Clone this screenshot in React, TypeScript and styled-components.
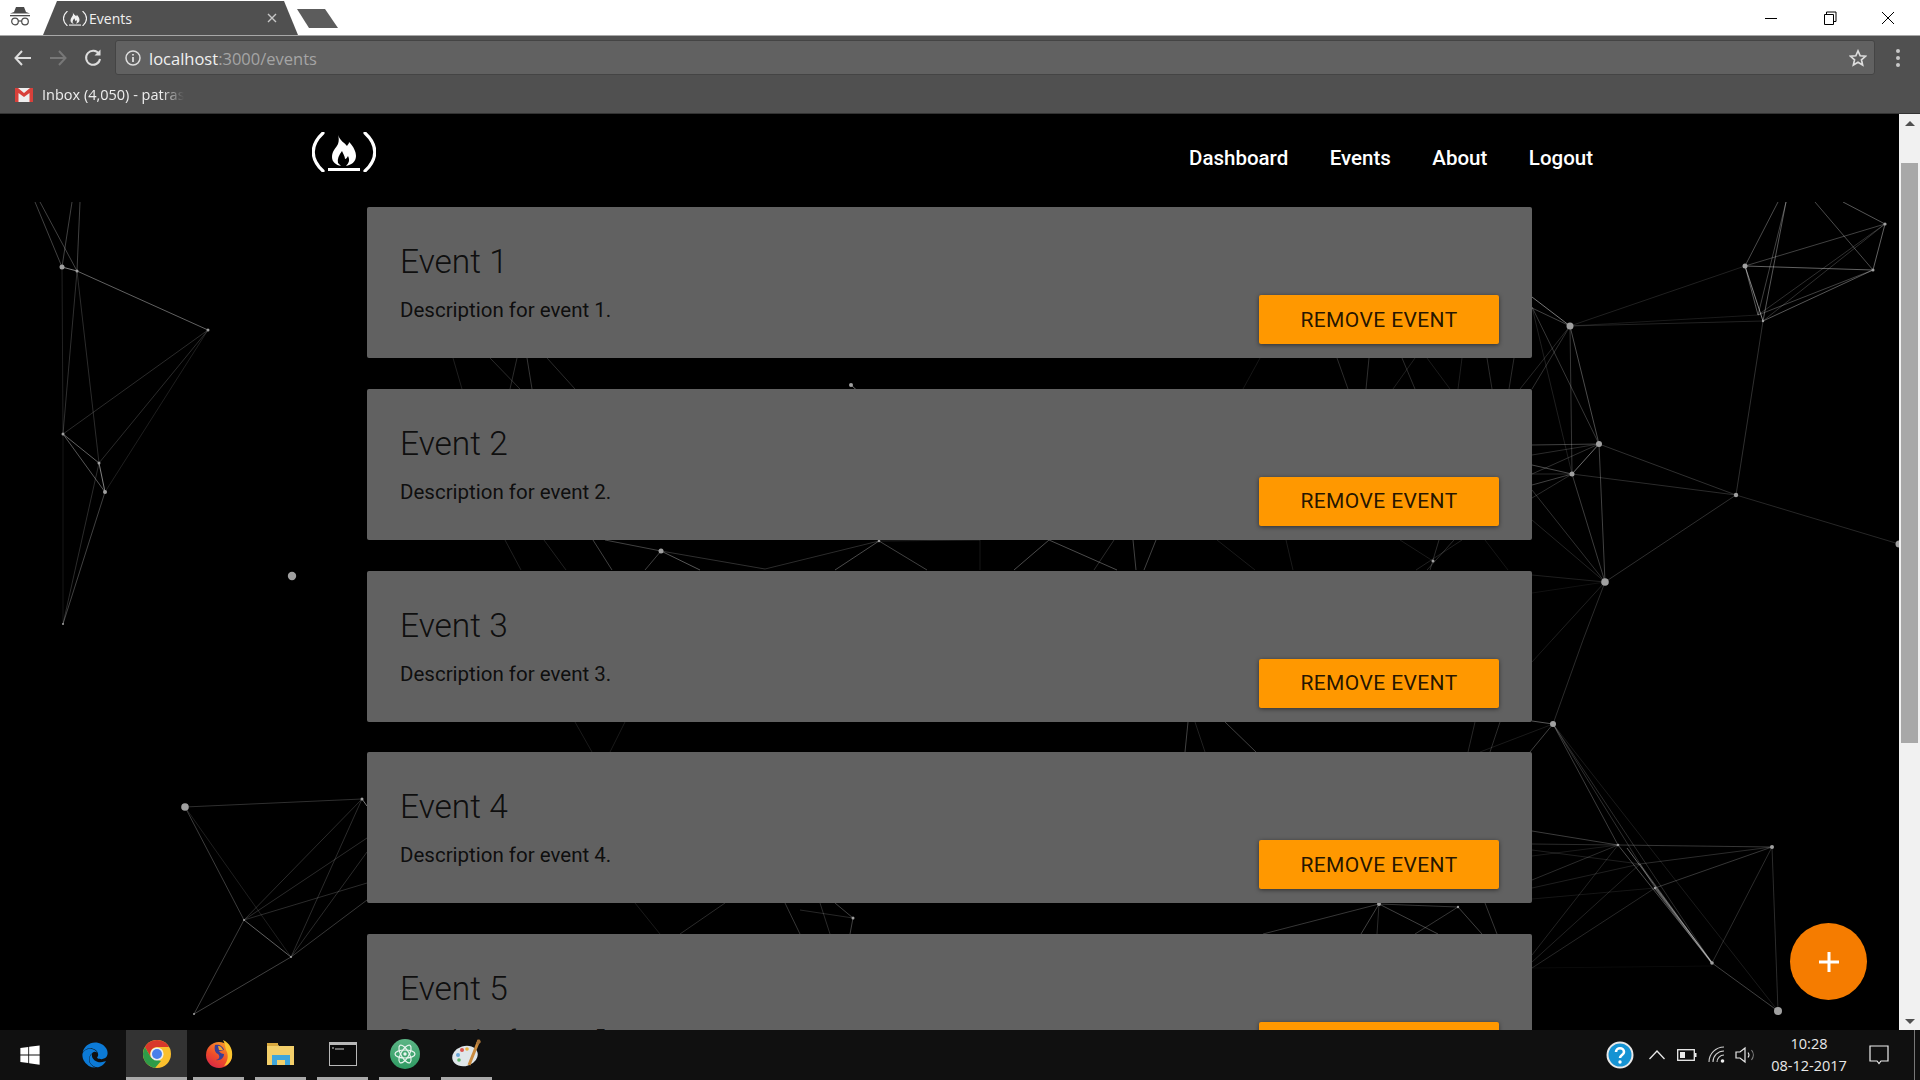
import React from "react";
import styled, { createGlobalStyle } from "styled-components";
import { FaEdge, FaWindows } from "react-icons/fa";

const GlobalStyle = createGlobalStyle`
  html, body { margin: 0; padding: 0; background: #000; overflow: hidden; }
  * { box-sizing: border-box; }
`;

const Screen = styled.div`
  width: 1920px;
  height: 1080px;
  display: flex;
  flex-direction: column;
  overflow: hidden;
  font-family: Roboto, sans-serif;
`;

/* browser chrome */
const TitleBar = styled.div`
  height: 35px;
  flex: none;
  background: #fff;
  display: flex;
  align-items: flex-end;
  padding-left: 7px;
`;
const Incognito = styled.div`
  width: 36px;
  height: 35px;
  flex: none;
  display: flex;
  align-items: flex-start;
  padding: 7px 0 0 3px;
`;
const Tab = styled.div`
  width: 255px;
  height: 34px;
  flex: none;
  background: #505050;
  clip-path: polygon(0 100%, 14px 0, 241px 0, 100% 100%);
  display: flex;
  align-items: center;
  padding: 0 21px 0 20px;
  color: #f0f0f0;
  font: 14px "Open Sans", sans-serif;
  gap: 2px;
`;
const TabTitle = styled.span`
  flex: 1;
`;
const NewTab = styled.div`
  width: 41px;
  height: 19px;
  margin: 0 0 7px -1px;
  background: #5c5c5c;
  clip-path: polygon(0 0, 28px 0, 100% 100%, 12px 100%);
`;
const WindowButtons = styled.div`
  margin-left: auto;
  height: 35px;
  display: flex;
  align-items: center;
  padding-right: 25px;
  gap: 43px;
`;
const Toolbar = styled.div`
  height: 44px;
  flex: none;
  background: #505050;
  border-top: 1px solid #a8a8a8;
  display: flex;
  align-items: center;
  padding: 0 14px 0 14px;
`;
const NavIcons = styled.div`
  width: 101px;
  display: flex;
  align-items: center;
  gap: 17px;
`;
const Omnibox = styled.div`
  width: 1760px;
  height: 35px;
  background: #616161;
  border: 1px solid #444;
  border-radius: 3px;
  display: flex;
  align-items: center;
  padding: 0 7px 0 9px;
  font: 16.5px "Open Sans", sans-serif;
  color: #a5a5a5;
  gap: 8px;
`;
const Host = styled.span`
  color: #f0f0f0;
`;
const Url = styled.div`
  flex: 1;
  padding-top: 1px;
`;
const Dots = styled.div`
  margin-left: 21px;
  display: flex;
  flex-direction: column;
  gap: 3px;
`;
const Dot = styled.div`
  width: 4px;
  height: 4px;
  border-radius: 50%;
  background: #c8c8c8;
`;
const Bookmarks = styled.div`
  height: 35px;
  flex: none;
  background: #505050;
  border-bottom: 1px solid #333;
  display: flex;
  align-items: center;
  padding: 0 0 3px 15px;
  gap: 9px;
`;
const BookmarkLabel = styled.span`
  width: 142px;
  white-space: nowrap;
  overflow: hidden;
  font: 14.5px "Open Sans", sans-serif;
  color: #eee;
  mask-image: linear-gradient(to right, #000 84%, transparent 100%);
`;

/* page */
const Body = styled.div`
  flex: 1;
  min-height: 0;
  display: flex;
`;
const Viewport = styled.main`
  flex: 1;
  position: relative;
  background: #000;
  overflow: hidden;
`;
const Network = styled.svg`
  position: absolute;
  left: 0;
  top: 88px;
`;
const Header = styled.header`
  position: relative;
  height: 93px;
  display: flex;
  justify-content: space-between;
  padding: 18px 306px 0 312px;
`;
const Logo = styled.div`
  line-height: 0;
`;
const NavLinks = styled.nav`
  display: flex;
  gap: 41.5px;
  padding-top: 14px;
`;
const NavLink = styled.a`
  color: #fff;
  font-size: 20.5px;
  font-weight: 500;
  line-height: 25px;
`;
const CardList = styled.div`
  position: relative;
  display: flex;
  flex-direction: column;
  gap: 30.75px;
  margin: 0 367px;
`;
const Card = styled.section`
  flex: none;
  height: 151px;
  background: #616161;
  border-radius: 2px;
  display: flex;
  justify-content: space-between;
  padding: 0 33px 14px 33px;
`;
const CardText = styled.div`
  padding-top: 34px;
`;
const CardTitle = styled.h2`
  margin: 0;
  font-size: 33.5px;
  font-weight: 300;
  line-height: 42px;
  color: rgba(0, 0, 0, 0.87);
`;
const CardDescription = styled.p`
  margin: 13px 0 0;
  font-size: 20.5px;
  font-weight: 400;
  line-height: 28px;
  color: rgba(0, 0, 0, 0.87);
`;
const RemoveButton = styled.button`
  align-self: flex-end;
  width: 240px;
  height: 49px;
  border: 0;
  border-radius: 2px;
  background: #ff9800;
  color: rgba(0, 0, 0, 0.87);
  font-family: Roboto, sans-serif;
  font-size: 21px;
  letter-spacing: 0.4px;
  box-shadow: 0 1px 4px rgba(0, 0, 0, 0.5);
`;
const Fab = styled.button`
  position: absolute;
  left: 1790px;
  top: 809px;
  width: 77px;
  height: 77px;
  border: 0;
  border-radius: 50%;
  background: #f57c00;
  display: flex;
  align-items: center;
  justify-content: center;
`;
const Scrollbar = styled.div`
  width: 21px;
  flex: none;
  background: #f1f1f1;
  display: flex;
  flex-direction: column;
  align-items: center;
  justify-content: space-between;
  padding: 7px 0 6px;
  position: relative;
`;
const Thumb = styled.div`
  position: absolute;
  left: 2px;
  right: 2px;
  top: 49px;
  height: 580px;
  background: #a8a8a8;
`;
const Arrow = styled.div<{ $down?: boolean }>`
  width: 0;
  height: 0;
  border-left: 5px solid transparent;
  border-right: 5px solid transparent;
  ${(p) => (p.$down ? "border-top: 5px solid #505050;" : "border-bottom: 5px solid #505050;")}
`;

/* taskbar */
const Taskbar = styled.footer`
  height: 50px;
  flex: none;
  background: #101010;
  display: flex;
  align-items: stretch;
`;
const StartButton = styled.div`
  width: 64px;
  display: flex;
  align-items: center;
  justify-content: center;
  padding-right: 4px;
  color: #fff;
`;
const PlainTask = styled.div`
  width: 62px;
  display: flex;
  align-items: center;
  justify-content: center;
`;
const AppTask = styled.div<{ $active?: boolean }>`
  width: ${(p) => (p.$active ? "61px" : "51px")};
  margin-right: ${(p) => (p.$active ? "6px" : "11px")};
  display: flex;
  align-items: center;
  justify-content: center;
  background: ${(p) => (p.$active ? "#333" : "transparent")};
  border-bottom: 3px solid #a9a9a9;
`;
const Tray = styled.div`
  margin-left: auto;
  display: flex;
  align-items: center;
`;
const TrayIcon = styled.div<{ $w: number }>`
  width: ${(p) => p.$w}px;
  display: flex;
  align-items: center;
  justify-content: center;
`;
const Clock = styled.div`
  width: 90px;
  margin-left: 4px;
  color: #e8e8e8;
  font: 14.5px/22px "Open Sans", sans-serif;
  text-align: center;
`;
const Notify = styled.div`
  width: 60px;
  height: 100%;
  display: flex;
  align-items: center;
  justify-content: center;
  padding-right: 10px;
`;
const ShowDesktop = styled.div`
  width: 6px;
  height: 100%;
  border-left: 1px solid #777;
`;

// x1 y1 x2 y2 opacity width
const LINKS: number[][] = [
  // top left
  [62,267,77,271,.6],[77,271,208,330,.45],[62,267,35,202,.3],[77,271,40,202,.3],[62,267,72,202,.3],[77,271,80,202,.3],
  [62,267,63,434,.16],[77,271,63,434,.22],[77,271,99,463,.2],[63,434,208,330,.2],[99,463,208,330,.2],[105,492,208,330,.14],
  [63,434,99,463,.45],[63,434,105,492,.4],[99,463,105,492,.6],[105,492,63,624,.3],[99,463,63,624,.2],[63,434,63,624,.1],
  // top right
  [1745,266,1778,202,.35],[1763,321,1786,202,.4],[1758,315,1786,202,.3],[1873,270,1815,202,.35],[1885,224,1843,202,.4],
  [1745,266,1885,224,.3],[1745,266,1873,270,.45],[1745,266,1763,321,.6],[1745,266,1758,315,.4],[1763,321,1873,270,.4],
  [1758,315,1873,270,.3],[1763,321,1885,224,.22],[1758,315,1885,224,.22],[1873,270,1885,224,.45],[1570,326,1745,266,.15],
  [1570,326,1763,321,.16],[1570,326,1758,315,.12],[1532,297,1570,326,.55],[1532,308,1570,326,.3],[1570,326,1599,444,.35],
  [1570,326,1572,474,.25],[1532,307,1599,444,.25],[1532,307,1572,474,.14],[1599,444,1605,582,.3],[1572,474,1605,582,.28],
  [1599,444,1736,495,.22],[1572,474,1736,495,.2],[1736,495,1605,582,.22],[1736,495,1763,321,.22],[1736,495,1899,544,.18],
  [1599,444,1572,474,.5],[1532,445,1599,444,.3],[1532,455,1599,444,.2],[1532,474,1599,444,.22],[1532,465,1572,474,.35],
  [1532,485,1572,474,.3],[1532,474,1572,474,.18],[1532,498,1572,474,.2],[1532,575,1605,582,.14],[1532,593,1605,582,.08],
  [1532,490,1605,582,.22],[1532,520,1605,582,.16],[1532,389,1570,326,.22],[1520,389,1570,326,.18],
  // lower right
  [1605,582,1583,640,.2],[1583,640,1553,724,.2],[1605,582,1552,640,.15],[1552,640,1532,662,.12],[1532,721,1553,724,.4],
  [1530,752,1553,724,.3],[1480,752,1553,724,.12],[1553,724,1618,845,.28],[1553,724,1655,888,.22],[1553,724,1712,963,.2],
  [1618,845,1712,963,.35],[1627,848,1712,963,.45],[1640,864,1712,963,.3],[1655,888,1712,963,.4,2],
  [1712,963,1772,847,.2],[1772,847,1778,1011,.2],[1712,963,1778,1011,.3],[1553,724,1778,1011,.12],[1618,845,1772,847,.25],
  [1640,864,1772,847,.2],[1655,888,1772,847,.25],[1532,831,1618,845,.28],[1532,844,1618,845,.2],[1532,880,1618,845,.2],
  [1532,850,1640,864,.14],[1532,888,1640,864,.14],[1532,899,1655,888,.1],[1532,955,1618,845,.16],[1532,962,1640,864,.16],
  [1532,968,1655,888,.18],[1532,968,1712,966,.05],[1532,856,1618,845,.12],
  // lower left
  [185,807,362,799,.22],[185,807,244,920,.28],[185,807,291,957,.14],[244,920,291,957,.45],[244,920,194,1014,.28],
  [291,957,194,1014,.3],[244,920,362,799,.2],[291,957,362,799,.2],[244,920,367,838,.2],[244,920,367,883,.2],
  [291,957,367,852,.2],[291,957,367,900,.26],[362,799,367,806,.55],
  // between the cards
  [453,358,462,389,.14],[490,358,520,389,.2],[517,358,510,389,.2],[527,358,532,389,.25],[547,358,575,389,.2],
  [1260,358,1243,389,.1],[1337,358,1348,389,.2],[1369,358,1366,389,.22],[1415,358,1393,389,.14],[1402,358,1415,389,.2],
  [1427,358,1450,389,.12],[1462,358,1458,389,.14],[1487,358,1492,389,.2],[1514,358,1509,389,.2],
  [851,385,862,395,.5],[505,540,521,570,.15],[544,540,566,570,.15],[593,540,612,570,.3],[661,551,605,540,.3],
  [661,551,700,570,.4],[661,551,645,570,.3],[661,551,765,569,.22],[879,541,835,570,.35],[879,541,927,570,.3],
  [879,541,765,569,.2],[879,541,980,540,.15],[1014,570,1049,540,.35],[1049,540,1117,570,.35],[1114,540,1094,570,.2],
  [1133,540,1136,570,.3],[1156,540,1144,570,.3],[1217,540,1255,570,.12],[1286,540,1293,570,.12],[1400,540,1433,561,.12],
  [1462,540,1416,570,.15],[1454,540,1427,570,.2],[1439,540,1430,570,.2],[1485,540,1508,570,.1],[980,540,980,570,.1],
  [575,722,592,752,.12],[625,722,610,752,.12],[1188,722,1185,752,.3],[1225,722,1256,752,.3],[1195,722,1205,752,.15],
  [1475,722,1468,752,.18],[1500,722,1490,752,.2],[680,934,725,903,.2],[635,903,660,934,.12],[785,903,800,934,.25],
  [835,903,853,918,.3],[853,918,850,934,.3],[800,910,853,918,.18],[820,903,830,934,.2],[1379,904,1263,934,.25],
  [1379,904,1361,934,.3],[1379,904,1377,934,.2],[1379,904,1458,907,.25],[1379,904,1438,934,.3],[1458,907,1415,934,.25],
  [1458,907,1482,934,.3],[1485,903,1497,934,.25],
];

// x y radius
const NODES: number[][] = [
  [62,267,2.5],[77,271,1.5],[208,330,1.5],[63,434,1.5],[99,463,1.5],[105,492,2],[63,624,1],[292,576,4.2],
  [1570,326,3.5],[1599,444,3],[1572,474,2.5],[1605,582,3.8],[1736,495,2.2],[1745,266,2.5],[1763,321,1.2],[1873,270,1.5],
  [1885,224,1.6],[1899,544,3.5],[1553,724,3],[1618,845,1.3],[1655,888,1.2],[1712,963,1.8],[1772,847,2],[1778,1011,4],
  [185,807,3.8],[362,799,1.5],[244,920,1],[291,957,1],[194,1014,1],[851,385,2],[661,551,2.5],[879,541,1.3],[1433,561,1.5],
  [853,918,1.5],[1379,904,2],[1458,907,1.2],
];

const NetworkLines = () => (
  <Network width={1899} height={828} viewBox="0 202 1899 828">
    <g opacity={0.85}>
      {LINKS.map(([x1, y1, x2, y2, o, w], i) => (
        <line key={i} x1={x1} y1={y1} x2={x2} y2={y2} stroke="#fff" strokeOpacity={o} strokeWidth={w || 1} />
      ))}
    </g>
    {NODES.map(([cx, cy, r], i) => (
      <circle key={i} cx={cx} cy={cy} r={r} fill="#a0a0a0" />
    ))}
  </Network>
);

const FlameLogo = ({ width, color = "#fff" }: { width: number; color?: string }) => (
  <svg width={width} height={(width * 40) / 64} viewBox="0 0 64 40">
    <path d="M11 1 C-2 13 -2 27 11 39 M53 1 C66 13 66 27 53 39" fill="none" stroke={color} strokeWidth="3.2" strokeLinecap="round" />
    <path
      d="M26 3 C28 9 33 11 35 14 C36 12 37 12 37 10 C42 15 44 20 44 24 C44 30 39 33 34 34 C37 31 38 28 36 24 C35 26 34 27 33 27 C33 24 31 22 30 19 C27 23 25 27 26 31 C27 32 28 33 29 34 C24 33 20 30 20 25 C20 19 24 16 26 12 C27 9 27 6 26 3 Z"
      fill={color}
    />
    <rect x="16" y="36" width="32" height="3" fill={color} />
  </svg>
);

const IncognitoIcon = () => (
  <svg width="20" height="19" viewBox="0 0 20 19">
    <path d="M6 0 L14 0 L16 5 L20 6.5 L0 6.5 L4 5 Z" fill="#4a4a4a" />
    <rect x="0" y="8" width="20" height="1.3" fill="#4a4a4a" />
    <circle cx="5" cy="14.5" r="3.3" fill="none" stroke="#4a4a4a" strokeWidth="1.2" />
    <circle cx="15" cy="14.5" r="3.3" fill="none" stroke="#4a4a4a" strokeWidth="1.2" />
    <path d="M8.3 14 H11.7" stroke="#4a4a4a" strokeWidth="1.2" />
  </svg>
);

const Chrome = () => (
  <svg width="28" height="28" viewBox="-14 -14 28 28">
    <circle r="14" fill="#fbc02d" />
    <path d="M0 -14 A14 14 0 0 0 -12.1 -7 L-6 3.5 A7 7 0 0 1 0 -7 H12.1 A14 14 0 0 0 0 -14 Z" fill="#d8382b" />
    <path d="M-12.1 -7 A14 14 0 0 0 -2 13.9 L4 7 L-6 3.5 Z" fill="#2e9b48" />
    <circle r="6.6" fill="#eee" />
    <circle r="5" fill="#4a80ea" />
  </svg>
);

const Firefox = () => (
  <svg width="28" height="28" viewBox="0 0 28 28">
    <defs>
      <linearGradient id="fx" x1="0.8" y1="0" x2="0.2" y2="1">
        <stop offset="0" stopColor="#f9a02a" />
        <stop offset="0.6" stopColor="#ee4a2a" />
        <stop offset="1" stopColor="#d8254a" />
      </linearGradient>
    </defs>
    <circle cx="14" cy="15" r="13" fill="url(#fx)" />
    <path d="M18 0 C25 3 28 10 27 17 C26 22 23 25 19 26 C23 21 24 15 21 10 C20 7 20 3 18 0 Z" fill="#fcc52f" />
    <path d="M10 5 C14 4 18 6 19 10 L14 11 C15 13 17 14 19 14 C19 18 15 21 11 20 C15 19 15 16 13 14 C10 13 9 9 10 5 Z" fill="#3a3f96" />
    <path d="M13 6 C16 6 17 8 18 10 L14 10 Z" fill="#f7a52a" />
  </svg>
);

const Folder = () => (
  <svg width="28" height="24" viewBox="0 0 28 24">
    <path d="M0 1 H10 L12 4 H27 V23 H0 Z" fill="#f3cf6a" />
    <rect x="0" y="1" width="11" height="3" fill="#d9a93f" />
    <path d="M5 23 V13 H23 V23 H18 V18 H10 V23 Z" fill="#3fa6dc" />
  </svg>
);

const Terminal = () => (
  <svg width="28" height="24" viewBox="0 0 28 24">
    <rect x="0.5" y="0.5" width="27" height="23" fill="#0a0a0a" stroke="#b8b8b8" />
    <rect x="0.5" y="0.5" width="27" height="2.5" fill="#b8b8b8" />
    <path d="M3 6 H5 M6 7 H15" stroke="#ccc" strokeWidth="1" />
  </svg>
);

const Atom = () => (
  <svg width="30" height="30" viewBox="-15 -15 30 30">
    <defs>
      <linearGradient id="atomBg" x1="0" y1="0" x2="0" y2="1">
        <stop offset="0" stopColor="#5cb585" />
        <stop offset="1" stopColor="#2f9a62" />
      </linearGradient>
    </defs>
    <circle r="15" fill="url(#atomBg)" />
    <g fill="none" stroke="#eaf5ef" strokeWidth="1.2">
      <ellipse rx="10" ry="4" />
      <ellipse rx="10" ry="4" transform="rotate(60)" />
      <ellipse rx="10" ry="4" transform="rotate(120)" />
    </g>
    <circle r="1.7" fill="#eaf5ef" />
  </svg>
);

const Palette = () => (
  <svg width="30" height="30" viewBox="0 0 30 30">
    <ellipse cx="13" cy="17" rx="13" ry="10" fill="#dfe6ea" transform="rotate(-18 13 17)" />
    <circle cx="6" cy="16" r="2" fill="#6aa7d8" />
    <circle cx="10" cy="11" r="2" fill="#d9534f" />
    <circle cx="15" cy="10" r="1.8" fill="#e9b23c" />
    <circle cx="7" cy="21" r="1.8" fill="#5cb56a" />
    <path d="M27 1 L17 26" stroke="#c98a3e" strokeWidth="3" />
    <path d="M27 0 L29 3 L26 6 L24 4 Z" fill="#a8743a" />
  </svg>
);

const Gmail = () => (
  <svg width="18" height="14" viewBox="0 0 18 14">
    <rect width="18" height="14" fill="#eee" />
    <path d="M0 0 H3 L9 5 L15 0 H18 V14 H14.5 V5 L9 9 L3.5 5 V14 H0 Z" fill="#d8403a" />
  </svg>
);

const events = [1, 2, 3, 4, 5];

export default function App() {
  return (
    <Screen>
      <GlobalStyle />
      <TitleBar>
        <Incognito>
          <IncognitoIcon />
        </Incognito>
        <Tab>
          <FlameLogo width={24} color="#f0f0f0" />
          <TabTitle>Events</TabTitle>
          <svg width="10" height="10" viewBox="0 0 10 10">
            <path d="M1 1 L9 9 M9 1 L1 9" stroke="#c8c8c8" strokeWidth="1.4" />
          </svg>
        </Tab>
        <NewTab />
        <WindowButtons>
          <svg width="16" height="14" viewBox="0 0 16 14">
            <path d="M2 7.5 H14" stroke="#000" />
          </svg>
          <svg width="16" height="14" viewBox="0 0 16 14">
            <path d="M2.5 3.5 H11.5 V13.5 H2.5 Z M4.5 3.5 V1 H14 V10.5 H11.5" fill="none" stroke="#000" />
          </svg>
          <svg width="14" height="14" viewBox="0 0 14 14">
            <path d="M1 1 L13 13 M13 1 L1 13" stroke="#000" />
          </svg>
        </WindowButtons>
      </TitleBar>
      <Toolbar>
        <NavIcons>
          <svg width="18" height="16" viewBox="0 0 18 16">
            <path d="M17 8 H2 M8 1 L1.5 8 L8 15" fill="none" stroke="#ddd" strokeWidth="2" />
          </svg>
          <svg width="18" height="16" viewBox="0 0 18 16">
            <path d="M1 8 H16 M10 1 L16.5 8 L10 15" fill="none" stroke="#777" strokeWidth="2" />
          </svg>
          <svg width="18" height="18" viewBox="0 0 18 18">
            <path d="M15 5 A7 7 0 1 0 16 10" fill="none" stroke="#ddd" strokeWidth="2" />
            <path d="M10.5 6.5 H16.5 V0.5 Z" fill="#ddd" />
          </svg>
        </NavIcons>
        <Omnibox>
          <svg width="16" height="16" viewBox="0 0 16 16">
            <circle cx="8" cy="8" r="7" fill="none" stroke="#ddd" strokeWidth="1.5" />
            <path d="M8 7 V12 M8 4 V5.6" stroke="#ddd" strokeWidth="1.8" />
          </svg>
          <Url>
            <Host>localhost</Host>:3000/events
          </Url>
          <svg width="18" height="18" viewBox="0 0 24 24">
            <path d="M12 2.5 L14.9 9 L22 9.7 L16.6 14.4 L18.2 21.4 L12 17.7 L5.8 21.4 L7.4 14.4 L2 9.7 L9.1 9 Z" fill="none" stroke="#ddd" strokeWidth="2.2" />
          </svg>
        </Omnibox>
        <Dots>
          <Dot />
          <Dot />
          <Dot />
        </Dots>
      </Toolbar>
      <Bookmarks>
        <Gmail />
        <BookmarkLabel>Inbox (4,050) - patras</BookmarkLabel>
      </Bookmarks>
      <Body>
        <Viewport>
          <NetworkLines />
          <Header>
            <Logo>
              <FlameLogo width={64} />
            </Logo>
            <NavLinks>
              <NavLink>Dashboard</NavLink>
              <NavLink>Events</NavLink>
              <NavLink>About</NavLink>
              <NavLink>Logout</NavLink>
            </NavLinks>
          </Header>
          <CardList>
            {events.map((n) => (
              <Card key={n}>
                <CardText>
                  <CardTitle>Event {n}</CardTitle>
                  <CardDescription>Description for event {n}.</CardDescription>
                </CardText>
                <RemoveButton>REMOVE EVENT</RemoveButton>
              </Card>
            ))}
          </CardList>
          <Fab aria-label="Add event">
            <svg width="20" height="20" viewBox="0 0 20 20">
              <path d="M10 0 V20 M0 10 H20" stroke="#fff" strokeWidth="3" />
            </svg>
          </Fab>
        </Viewport>
        <Scrollbar>
          <Arrow />
          <Thumb />
          <Arrow $down />
        </Scrollbar>
      </Body>
      <Taskbar>
        <StartButton>
          <FaWindows size={22} />
        </StartButton>
        <PlainTask>
          <FaEdge size={26} color="#0c7ad6" />
        </PlainTask>
        <AppTask $active>
          <Chrome />
        </AppTask>
        <AppTask>
          <Firefox />
        </AppTask>
        <AppTask>
          <Folder />
        </AppTask>
        <AppTask>
          <Terminal />
        </AppTask>
        <AppTask>
          <Atom />
        </AppTask>
        <AppTask>
          <Palette />
        </AppTask>
        <Tray>
          <TrayIcon $w={44}>
            <svg width="28" height="28" viewBox="0 0 28 28">
              <circle cx="14" cy="14" r="12.5" fill="#1593d3" stroke="#e8e8e8" strokeWidth="2" />
              <path d="M10 11 C10 6 18 6 18 11 C18 14 14 14 14 17" fill="none" stroke="#fff" strokeWidth="2.6" />
              <circle cx="14" cy="21" r="1.7" fill="#fff" />
            </svg>
          </TrayIcon>
          <TrayIcon $w={30}>
            <svg width="18" height="12" viewBox="0 0 18 12">
              <path d="M1.5 10 L9 2 L16.5 10" fill="none" stroke="#e8e8e8" strokeWidth="1.3" />
            </svg>
          </TrayIcon>
          <TrayIcon $w={30}>
            <svg width="20" height="12" viewBox="0 0 20 12">
              <rect x="0.7" y="0.7" width="16.6" height="10.6" fill="none" stroke="#eee" strokeWidth="1.3" />
              <rect x="3" y="3" width="5" height="6" fill="#eee" />
              <rect x="18" y="4" width="1.5" height="4" fill="#eee" />
            </svg>
          </TrayIcon>
          <TrayIcon $w={30}>
            <svg width="18" height="18" viewBox="0 0 18 18">
              <g fill="none" stroke="#cfcfcf" strokeWidth="1.1">
                <path d="M1 16 A15 15 0 0 1 16 1" />
                <path d="M5 16 A11 11 0 0 1 16 5" />
                <path d="M9 16 A7 7 0 0 1 16 9" />
              </g>
              <circle cx="14.5" cy="15" r="1.8" fill="#eee" />
            </svg>
          </TrayIcon>
          <TrayIcon $w={28}>
            <svg width="22" height="18" viewBox="0 0 22 18">
              <path d="M1 6 H5 L10 2 V16 L5 12 H1 Z" fill="none" stroke="#e8e8e8" strokeWidth="1.2" />
              <path d="M13 6.5 A4 4 0 0 1 13 11.5" fill="none" stroke="#e8e8e8" strokeWidth="1.1" />
              <path d="M16.5 4 A8 8 0 0 1 16.5 14" fill="none" stroke="#888" strokeWidth="1.1" />
            </svg>
          </TrayIcon>
          <Clock>
            <div>10:28</div>
            <div>08-12-2017</div>
          </Clock>
          <Notify>
            <svg width="20" height="20" viewBox="0 0 20 20">
              <path d="M1 1 H19 V16 H12 L10 18.5 L8 16 H1 Z" fill="none" stroke="#eee" strokeWidth="1.2" />
            </svg>
          </Notify>
          <ShowDesktop />
        </Tray>
      </Taskbar>
    </Screen>
  );
}
